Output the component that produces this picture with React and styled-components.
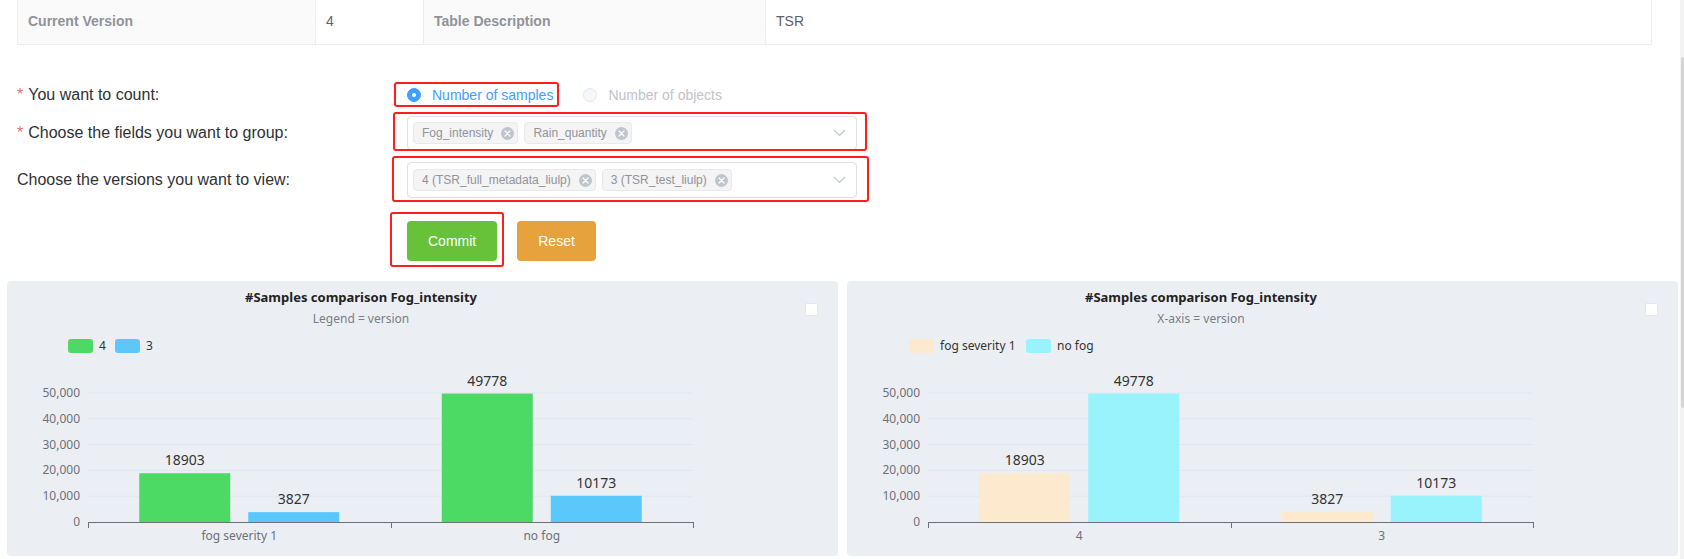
import React from "react";
import styled, { createGlobalStyle } from "styled-components";

const GlobalStyle = createGlobalStyle`
  html, body {
    margin: 0;
    padding: 0;
    background: #fff;
  }
  body {
    font-family: "Liberation Sans", Arial, sans-serif;
    overflow: hidden;
  }
`;

const AXIS_LEFT = 81;
const AXIS_RIGHT = 686;
const ZERO_Y = 241;
const PX_PER_UNIT = 129 / 50000;

const charts = [
  {
    title: "#Samples comparison Fog_intensity",
    subtitle: "Legend = version",
    legend: [
      { x: 61, label: "4", color: "#4cd964" },
      { x: 108, label: "3", color: "#5ac8fa" }
    ],
    categories: ["fog severity 1", "no fog"],
    series: [
      { color: "#4cd964", values: [18903, 49778] },
      { color: "#5ac8fa", values: [3827, 10173] }
    ]
  },
  {
    title: "#Samples comparison Fog_intensity",
    subtitle: "X-axis = version",
    legend: [
      { x: 62, label: "fog severity 1", color: "#fde9cd" },
      { x: 179, label: "no fog", color: "#99f3fd" }
    ],
    categories: ["4", "3"],
    series: [
      { color: "#fde9cd", values: [18903, 3827] },
      { color: "#99f3fd", values: [49778, 10173] }
    ]
  }
];

export default function App()
{
    return (
        <Page>
            <GlobalStyle />
            <Main>
                <InfoTable>
                    <tbody>
                        <tr>
                            <Cell $w={298} $head>Current Version</Cell>
                            <Cell $w={108}>4</Cell>
                            <Cell $w={342} $head>Table Description</Cell>
                            <Cell $w={886}>TSR</Cell>
                        </tr>
                    </tbody>
                </InfoTable>

                <Form>
                    <FormRow $h={24} $mb={9}>
                        <Label><Required>*</Required>You want to count:</Label>
                        <Marked $t={-1} $r={-6} $b={0} $l={-13}>
                            <RadioItem $checked>
                                <RadioDot $checked />
                                Number of samples
                            </RadioItem>
                        </Marked>
                        <RadioItem $gap>
                            <RadioDot />
                            Number of objects
                        </RadioItem>
                    </FormRow>

                    <FormRow $h={34} $mb={12}>
                        <Label><Required>*</Required>Choose the fields you want to group:</Label>
                        <Marked $t={-4} $r={-10} $b={-1} $l={-14}>
                            <Select $h={34}>
                                <Tag>Fog_intensity<TagClose /></Tag>
                                <Tag>Rain_quantity<TagClose /></Tag>
                                <Arrow />
                            </Select>
                        </Marked>
                    </FormRow>

                    <FormRow $h={36} $mb={23}>
                        <Label>Choose the versions you want to view:</Label>
                        <Marked $t={-6} $r={-12} $b={-4} $l={-15}>
                            <Select $h={36}>
                                <Tag>4 (TSR_full_metadata_liulp)<TagClose /></Tag>
                                <Tag>3 (TSR_test_liulp)<TagClose /></Tag>
                                <Arrow />
                            </Select>
                        </Marked>
                    </FormRow>

                    <FormRow $h={40} $mb={20}>
                        <Label />
                        <Marked $t={-9} $r={-7} $b={-6} $l={-17}>
                            <Button $tone="success">Commit</Button>
                        </Marked>
                        <Button $tone="warning" $gap>Reset</Button>
                    </FormRow>
                </Form>

                <ChartRow>
                    {charts.map((c, i) => (
                        <ChartCard key={i}>
                            <BarChart chart={c} />
                            <CornerCheck />
                        </ChartCard>
                    ))}
                </ChartRow>
            </Main>
            <ScrollRail>
                <ScrollThumb />
            </ScrollRail>
        </Page>
    )
}

function TagClose()
{
    return (
        <CloseDot>
            <svg width="7" height="7" viewBox="0 0 7 7">
                <path d="M1 1 L6 6 M6 1 L1 6" stroke="#fff" strokeWidth="1.2" strokeLinecap="round" />
            </svg>
        </CloseDot>
    )
}

function Arrow()
{
    return (
        <ArrowBox>
            <svg width="13" height="8" viewBox="0 0 13 8">
                <polyline points="1,1 6.5,6.5 12,1" fill="none" stroke="#c0c4cc" strokeWidth="1.2" />
            </svg>
        </ArrowBox>
    )
}

function BarChart({ chart })
{
    const yOf = (v) => ZERO_Y - v * PX_PER_UNIT;
    const band = (AXIS_RIGHT - AXIS_LEFT) / chart.categories.length;
    const ticks = [0, 10000, 20000, 30000, 40000, 50000];

    return (
        <ChartSvg width="831" height="275" viewBox="0 0 831 275">
            <text x="354" y="21" textAnchor="middle" fontSize="13" fontWeight="700" fill="#222">{chart.title}</text>
            <text x="354" y="42" textAnchor="middle" fontSize="12" fill="#7b7d85">{chart.subtitle}</text>

            {chart.legend.map((l) => (
                <g key={l.label}>
                    <rect x={l.x} y="58" width="25" height="14" rx="3" fill={l.color} />
                    <text x={l.x + 31} y="69" fontSize="12" fill="#333">{l.label}</text>
                </g>
            ))}

            {ticks.map((t) => (
                <g key={t}>
                    {t > 0 && <line x1={AXIS_LEFT} x2={AXIS_RIGHT} y1={yOf(t)} y2={yOf(t)} stroke="#e0e6f1" />}
                    <text x="73" y={yOf(t) + 4} textAnchor="end" fontSize="12" fill="#6e7079">{t.toLocaleString("en-US")}</text>
                </g>
            ))}

            {chart.categories.map((cat, i) => {
                const cx = AXIS_LEFT + band * (i + 0.5);
                return (
                    <g key={cat}>
                        {chart.series.map((s, j) => {
                            const v = s.values[i];
                            const x = j === 0 ? cx - 100 : cx + 9;
                            const top = yOf(v);
                            return (
                                <g key={j}>
                                    <rect x={x} y={top} width="91" height={ZERO_Y - top} fill={s.color} />
                                    <text x={x + 45.5} y={top - 8} textAnchor="middle" fontSize="14" fill="#333">{v}</text>
                                </g>
                            )
                        })}
                        <text x={cx} y="259" textAnchor="middle" fontSize="12" fill="#6e7079">{cat}</text>
                    </g>
                )
            })}

            <line x1={AXIS_LEFT} x2={AXIS_RIGHT} y1={ZERO_Y + 0.5} y2={ZERO_Y + 0.5} stroke="#6e7079" />
            {[0, 1, 2].map((k) => {
                const x = Math.round(AXIS_LEFT + band * k) + 0.5;
                return <line key={k} x1={x} x2={x} y1={ZERO_Y} y2={ZERO_Y + 6} stroke="#6e7079" />
            })}
        </ChartSvg>
    )
}

const Page = styled.div`
    display: flex;
    width: 1684px;
    height: 559px;
    overflow: hidden;
`

const Main = styled.div`
    width: 1680px;
    flex: none;
`

const ScrollRail = styled.div`
    width: 4px;
    height: 559px;
    padding-top: 57px;
    box-sizing: border-box;
    background: #f3f3f3;
`

const ScrollThumb = styled.div`
    height: 351px;
    margin-left: 1px;
    background: #d6d6d6;
    border-radius: 2px 0 0 2px;
`

const InfoTable = styled.table`
    width: 1634px;
    margin-left: 17px;
    border-collapse: collapse;
    table-layout: fixed;
    font-size: 14px;
`

const Cell = styled.td`
    box-sizing: border-box;
    width: ${p => p.$w}px;
    padding: 12px 10px 13px;
    line-height: 19px;
    border: 1px solid #ebeef5;
    border-top: none;
    background: ${p => p.$head ? "#fafafa" : "#fff"};
    color: ${p => p.$head ? "#909399" : "#606266"};
    font-weight: ${p => p.$head ? 700 : 400};
`

const Form = styled.div`
    padding: 38px 0 0 17px;
`

const FormRow = styled.div`
    display: flex;
    align-items: center;
    height: ${p => p.$h}px;
    margin-bottom: ${p => p.$mb}px;
`

const Label = styled.label`
    width: 390px;
    flex: none;
    font-size: 16px;
    color: #303133;
`

const Required = styled.span`
    color: #f56c6c;
    margin-right: 5px;
`

const Marked = styled.div`
    position: relative;
    display: flex;
    align-items: center;
    height: 100%;

    &::after {
        content: "";
        position: absolute;
        top: ${p => p.$t}px;
        right: ${p => p.$r}px;
        bottom: ${p => p.$b}px;
        left: ${p => p.$l}px;
        border: 2px solid #ff1e1e;
        border-radius: 3px;
        pointer-events: none;
    }
`

const RadioItem = styled.span`
    display: inline-flex;
    align-items: center;
    font-size: 14px;
    color: ${p => p.$checked ? "#409eff" : "#c0c4cc"};
    margin-left: ${p => p.$gap ? "30px" : "0"};
`

const RadioDot = styled.span`
    width: 14px;
    height: 14px;
    box-sizing: border-box;
    border-radius: 50%;
    border: 1px solid ${p => p.$checked ? "#409eff" : "#e4e7ed"};
    background: ${p => p.$checked ? "#409eff" : "#f5f7fa"};
    margin-right: 11px;
    display: flex;
    align-items: center;
    justify-content: center;

    &::after {
        content: "";
        width: 4px;
        height: 4px;
        border-radius: 50%;
        background: #fff;
        display: ${p => p.$checked ? "block" : "none"};
    }
`

const Select = styled.div`
    width: 450px;
    height: ${p => p.$h}px;
    box-sizing: border-box;
    border: 1px solid #dcdfe6;
    border-radius: 4px;
    background: #fff;
    display: flex;
    align-items: center;
    gap: 6px;
    padding: 0 10px 0 5px;
`

const Tag = styled.span`
    display: inline-flex;
    align-items: center;
    height: 22px;
    box-sizing: border-box;
    padding: 0 3px 0 8px;
    background: #f4f4f5;
    border: 1px solid #e9e9eb;
    border-radius: 4px;
    color: #909399;
    font-size: 12px;
`

const CloseDot = styled.span`
    width: 13px;
    height: 13px;
    margin-left: 8px;
    border-radius: 50%;
    background: #c0c4cc;
    display: flex;
    align-items: center;
    justify-content: center;
`

const ArrowBox = styled.span`
    margin-left: auto;
    display: flex;
    align-items: center;
`

const Button = styled.button`
    height: 40px;
    padding: 0 21px;
    margin-left: ${p => p.$gap ? "20px" : "0"};
    border: none;
    border-radius: 4px;
    font-family: "Liberation Sans", Arial, sans-serif;
    font-size: 14px;
    color: #fff;
    background: ${p => p.$tone === "success" ? "#67c23a" : "#e6a23c"};
`

const ChartRow = styled.div`
    display: grid;
    grid-template-columns: 831px 831px;
    gap: 9px;
    margin-left: 7px;
`

const ChartCard = styled.div`
    position: relative;
    height: 275px;
    background: #ebeff4;
    border-radius: 4px;
`

const ChartSvg = styled.svg`
    display: block;
    font-family: "Noto Sans", "Open Sans", sans-serif;
`

const CornerCheck = styled.span`
    position: absolute;
    top: 22px;
    left: 798px;
    width: 13px;
    height: 13px;
    box-sizing: border-box;
    background: #fff;
    border: 1px solid #e4e7ed;
    border-radius: 2px;
`
